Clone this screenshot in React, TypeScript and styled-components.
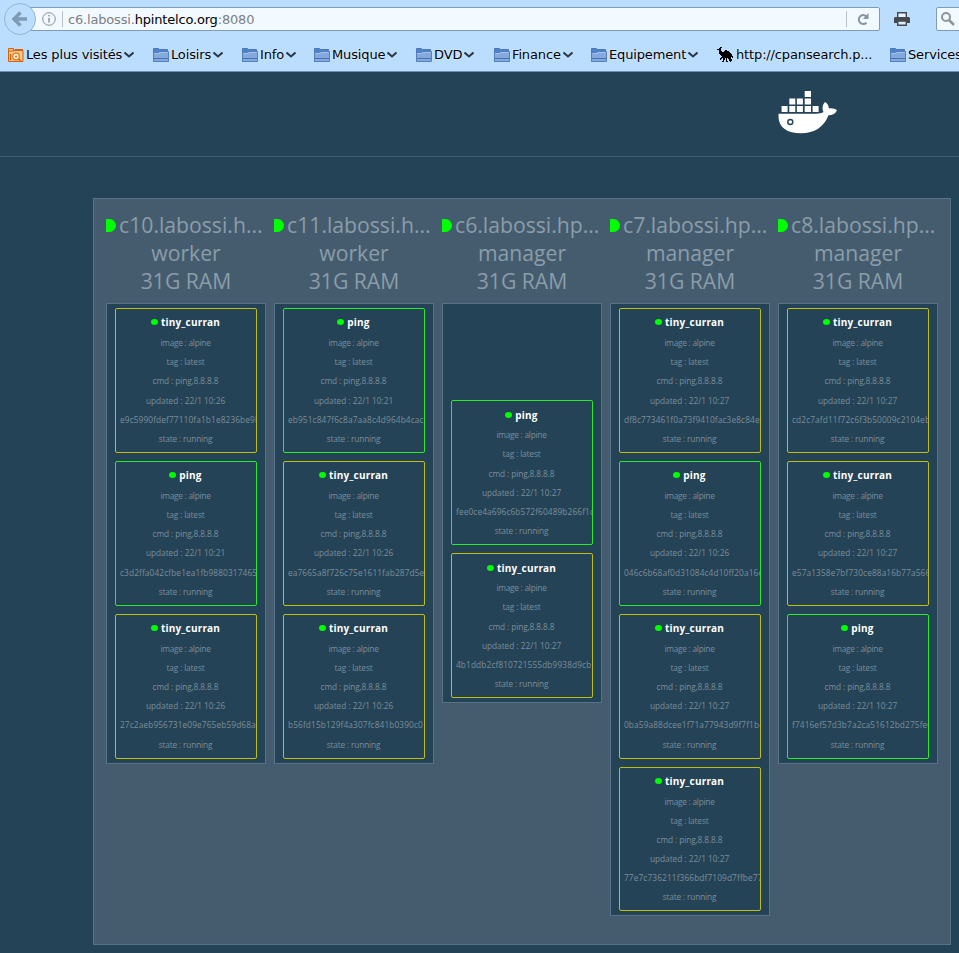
import React from "react";
import styled, { createGlobalStyle } from "styled-components";

const GlobalStyle = createGlobalStyle`
  * { box-sizing: border-box; }
  html, body { margin: 0; padding: 0; overflow: hidden; }
  body { width: 959px; height: 953px; background: #254356; }
`;

const Window = styled.div`
  width: 959px;
  height: 953px;
  overflow: hidden;
  background: #254356;
  font-family: "Open Sans", "Noto Sans", sans-serif;
`;

const Chrome = styled.header`
  height: 72px;
  overflow: hidden;
  background: #bbdeff;
  border-bottom: 1px solid #6d92ad;
  font-family: "DejaVu Sans", sans-serif;
  font-size: 13px;
  color: #000;
`;

const NavBar = styled.div`
  display: flex;
  align-items: center;
  height: 38px;
  padding-left: 4px;
`;

const BackButton = styled.div`
  position: relative;
  z-index: 1;
  width: 32px;
  height: 32px;
  flex: none;
  display: grid;
  place-items: center;
  border: 1px solid #94b5d3;
  border-radius: 50%;
  background: #bbdeff;
`;

const AddressBar = styled.div`
  display: flex;
  align-items: center;
  width: 851px;
  height: 24px;
  flex: none;
  margin-left: -7px;
  padding-left: 12px;
  background: #f2f9ff;
  border: 1px solid #7f9cb6;
  border-radius: 0 2px 2px 0;
`;

const Separator = styled.i<{ $gap: number; $tall?: boolean }>`
  width: 1px;
  height: ${(p) => (p.$tall ? 23 : 16)}px;
  margin-left: ${(p) => p.$gap}px;
  background: ${(p) => (p.$tall ? "#a3c8ea" : "#b9c2cb")};
`;

const Url = styled.span`
  flex: 1;
  padding: 1px 0 0 5px;
  color: #7b7f83;
  letter-spacing: -0.18px;
  line-height: 20px;
  white-space: nowrap;
  b { font-weight: 400; color: #000; }
`;

const ReloadSlot = styled.span`
  width: 33px;
  height: 16px;
  display: grid;
  place-items: center;
  border-left: 1px solid #b9c2cb;
`;

const PrintSlot = styled.span`
  display: flex;
  margin-left: 14px;
`;

const SearchBox = styled.div`
  width: 60px;
  height: 24px;
  flex: none;
  margin-left: 9px;
  padding: 3px 0 0 3px;
  background: #f2f9ff;
  border: 1px solid #7f9cb6;
  border-radius: 2px;
`;

const BookmarksBar = styled.nav`
  display: flex;
  height: 33px;
  padding: 0 0 0 8px;
`;

const Bookmark = styled.div<{ $width: number; $gap: number }>`
  display: flex;
  align-items: center;
  width: ${(p) => p.$width}px;
  height: 33px;
  flex: none;
  letter-spacing: -0.14px;
  white-space: nowrap;
  text-shadow: 0 0 2px #e8f5ff;
  svg { flex: none; }
  span { margin: 0 2px 0 ${(p) => p.$gap}px; }
`;

const PageHeader = styled.div`
  display: flex;
  height: 85px;
  padding: 19px 0 0 778px;
  border-bottom: 1px solid #44606f;
`;

const Cluster = styled.main`
  display: flex;
  align-items: flex-start;
  gap: 8px;
  width: 858px;
  height: 747px;
  margin: 41px 0 0 93px;
  padding: 12px 12px;
  background: #455c6e;
  border: 1px solid #567388;
`;

const NodeColumn = styled.section`
  width: 160px;
  flex: none;
`;

const NodeTitle = styled.div`
  height: 92px;
  color: #8a9daa;
  font-size: 21.2px;
  line-height: 28px;
  text-align: center;
  white-space: nowrap;
`;

const NodeName = styled.div`
  display: flex;
  align-items: center;
  overflow: hidden;
`;

const NodeDot = styled.i`
  width: 10px;
  height: 13px;
  flex: none;
  margin-right: 3px;
  border-radius: 0 7px 7px 0;
  background: #0f0;
`;

const TaskStack = styled.div`
  display: flex;
  flex-direction: column;
  justify-content: flex-end;
  gap: 8px;
  min-height: 400px;
  padding: 4px 8px;
  background: #254356;
  border: 1px solid #567388;
`;

const TaskCard = styled.article<{ $color: string }>`
  width: 142px;
  height: 144.85px;
  flex: none;
  overflow: hidden;
  padding: 3.6px 4px 0;
  border: 1px solid ${(p) => p.$color};
  border-radius: 2px;
  color: #7b8e9b;
  font-size: 8.3px;
  text-align: center;
`;

const TaskName = styled.div`
  display: flex;
  align-items: center;
  justify-content: center;
  gap: 3px;
  height: 20.4px;
  padding-bottom: 0.6px;
  margin-left: -1px;
  color: #fff;
  font-size: 10px;
  font-weight: 700;
  letter-spacing: 0.18px;
`;

const TaskDot = styled.i`
  width: 7px;
  height: 6px;
  border-radius: 50%;
  background: #0f0;
`;

const TaskLine = styled.div<{ $spacing: number; $left?: boolean }>`
  height: 19.2px;
  margin-left: ${(p) => (p.$left ? 0 : -1)}px;
  line-height: 19.2px;
  letter-spacing: ${(p) => p.$spacing}px;
  white-space: nowrap;
  text-align: ${(p) => (p.$left ? "left" : "center")};
`;

const Folder = () => (
  <svg width="16" height="16" viewBox="0 0 16 16">
    <path d="M.5 14.500V1.500h5l1 1h8v12z" fill="#4f83c8" stroke="#4a7abb" />
    <path d="M.5 5.500h5l1-1h9v10H.5z" fill="#84a9dd" stroke="#5580bd" />
    <path d="M1 11.500h14" stroke="#4672b0" />
    <path d="M1.500 6.500h5l1-1h7" fill="none" stroke="#a4c3ec" />
  </svg>
);

const MostVisited = () => (
  <svg width="16" height="16" viewBox="0 0 16 16">
    <path d="M.5 14.500v-13h5v2h9.500v11z" fill="#f9c48c" stroke="#d86208" />
    <path d="M1 4h5l1-1.500h8" fill="none" stroke="#d86208" />
    <circle cx="8" cy="9.500" r="3.300" fill="#fff0dc" stroke="#e07a20" strokeWidth="1.300" />
    <circle cx="8" cy="9.500" r="1" fill="#d86208" />
    <path d="m10.500 12 2.500 2M2.500 7v6" stroke="#d86208" strokeWidth="1.300" />
  </svg>
);

const Camel = () => (
  <svg width="16" height="16" viewBox="0 0 16 16" shapeRendering="crispEdges">
    <path d="M0 2h2V1h1V0h2v1H4v3h1v1h2V4h1V3h2v1h2v1h1v1h1v1h1v2h1v2h-1v-1h-1v2h1v2h-1v1h-1v-1h-1v-2h-1v-1h-1v3h1v1H9v-4H8v2H7v2H5v-1h1v-3H5v1H4v1H3v-2h1v-1h1V9H4V8H3V7H2V3H0z" />
  </svg>
);

const Chevron = () => (
  <svg width="10" height="8" viewBox="0 0 10 8">
    <path d="M.5 1.500 5 5.500l4.500-4" fill="none" stroke="#2b3742" strokeWidth="2" />
  </svg>
);

const Whale = () => (
  <svg width="60" height="44" viewBox="0 0 60 44" fill="#fff">
    <path d="M26.700 0H33v6h-6.300zM11.300 7.500h6v5.900h-6zM18.900 7.500h6v5.900h-6zM26.700 7.500H33v5.900h-6.300zM3.600 15h6v6h-6zM11.300 15h6v6h-6zM18.900 15h6v6h-6zM26.700 15H33v6h-6.300zM34.600 15h6v6h-6z" />
    <path
      fillRule="evenodd"
      d="M.6 22.700H38c3.500 0 6-.4 7.500-1.600-1.800-3.500-1-7.500 1.600-10.100 2.500 1.600 3.800 4 3.700 6.500 3-.6 6 .2 8.200 1.700-1.500 3.400-4.200 5-8.500 5.100C46 36 36.500 42.300 23 42.300 8.500 42.300-.8 36 .6 22.700zM12.300 27.800a3.200 3.200 0 1 0 0 6.400 3.200 3.200 0 0 0 0-6.400zm0 1.400a1.800 1.800 0 1 1 0 3.600 1.800 1.800 0 0 1 0-3.600z"
    />
  </svg>
);

const bookmarks: [string, number, "folder" | "visited" | "camel"][] = [
  ["Les plus visités", 145, "visited"],
  ["Loisirs", 89, "folder"],
  ["Info", 72, "folder"],
  ["Musique", 102, "folder"],
  ["DVD", 78, "folder"],
  ["Finance", 97, "folder"],
  ["Equipement", 126, "folder"],
  ["http://cpansearch.p...", 173, "camel"],
  ["Services", 90, "folder"],
];

type Task = [service: string, time: string, hash: string];
type ClusterNode = { name: string; role: string; tasks: Task[] };

const nodes: ClusterNode[] = [
  {
    name: "c10.labossi.h...", role: "worker", tasks: [
      ["tiny_curran", "10:26", "e9c5990fdef77110fa1b1e8236be9b"],
      ["ping", "10:21", "c3d2ffa042cfbe1ea1fb9880317465"],
      ["tiny_curran", "10:26", "27c2aeb956731e09e765eb59d68a8"],
    ],
  },
  {
    name: "c11.labossi.h...", role: "worker", tasks: [
      ["ping", "10:21", "eb951c847f6c8a7aa8c4d964b4cac8"],
      ["tiny_curran", "10:26", "ea7665a8f726c75e1611fab287d5ea"],
      ["tiny_curran", "10:26", "b56fd15b129f4a307fc841b0390c0"],
    ],
  },
  {
    name: "c6.labossi.hp...", role: "manager", tasks: [
      ["ping", "10:27", "fee0ce4a696c6b572f60489b266f1d"],
      ["tiny_curran", "10:27", "4b1ddb2cf810721555db9938d9cb"],
    ],
  },
  {
    name: "c7.labossi.hp...", role: "manager", tasks: [
      ["tiny_curran", "10:27", "df8c773461f0a73f9410fac3e8c84e"],
      ["ping", "10:26", "046c6b68af0d31084c4d10ff20a16e"],
      ["tiny_curran", "10:27", "0ba59a88dcee1f71a77943d9f7f1bd"],
      ["tiny_curran", "10:27", "77e7c736211f366bdf7109d7ffbe77"],
    ],
  },
  {
    name: "c8.labossi.hp...", role: "manager", tasks: [
      ["tiny_curran", "10:27", "cd2c7afd11f72c6f3b50009c2104eb"],
      ["tiny_curran", "10:27", "e57a1358e7bf730ce88a16b77a566"],
      ["ping", "10:27", "f7416ef57d3b7a2ca51612bd275fe6"],
    ],
  },
];

export default function App() {
  return (
    <Window>
      <GlobalStyle />
      <Chrome>
        <NavBar>
          <BackButton>
            <svg width="16" height="16" viewBox="0 0 16 16">
              <path d="M8.500 1.500 2 8l6.500 6.500M2.500 8H15" fill="none" stroke="#7f9ab4" strokeWidth="3.500" />
            </svg>
          </BackButton>
          <AddressBar>
            <svg width="14" height="14" viewBox="0 0 14 14" fill="none" stroke="#8b9095">
              <circle cx="7" cy="7" r="6.300" />
              <path d="M7 6v4.500M7 3v1.500" strokeWidth="1.500" />
            </svg>
            <Separator $gap={6} />
            <Url>c6.labossi.<b>hpintelco.org</b>:8080</Url>
            <ReloadSlot>
              <svg width="13" height="13" viewBox="0 0 13 13">
                <path d="M9.500 9.800A4.500 4.500 0 1 1 10 4" fill="none" stroke="#8594a5" strokeWidth="2" />
                <path d="M11.500 0v6H6z" fill="#8594a5" />
              </svg>
            </ReloadSlot>
          </AddressBar>
          <PrintSlot>
            <svg width="16" height="14" viewBox="0 0 16 14">
              <path d="M3.700 5V.7h8.600V5" fill="#e8f4ff" stroke="#45494e" strokeWidth="1.400" />
              <path d="M1 5h14l1 1v5H0V6z" fill="#45494e" />
              <path d="M3.700 9h8.600v4.300H3.700z" fill="#dcecf8" stroke="#45494e" strokeWidth="1.400" />
            </svg>
          </PrintSlot>
          <Separator $gap={17} $tall />
          <SearchBox>
            <svg width="16" height="16" viewBox="0 0 16 16" fill="none" stroke="#8d949b">
              <circle cx="6" cy="6" r="4" strokeWidth="2" />
              <path d="m9 9 5 5" strokeWidth="2.500" />
            </svg>
          </SearchBox>
        </NavBar>
        <BookmarksBar>
          {bookmarks.map(([label, width, icon]) => (
            <Bookmark key={label} $width={width} $gap={icon === "camel" ? 3 : 2}>
              {icon === "folder" ? <Folder /> : icon === "visited" ? <MostVisited /> : <Camel />}
              <span>{label}</span>
              {icon !== "camel" && <Chevron />}
            </Bookmark>
          ))}
        </BookmarksBar>
      </Chrome>
      <PageHeader>
        <Whale />
      </PageHeader>
      <Cluster>
        {nodes.map((node) => (
          <NodeColumn key={node.name}>
            <NodeTitle>
              <NodeName><NodeDot />{node.name}</NodeName>
              <div>{node.role}</div>
              <div>31G RAM</div>
            </NodeTitle>
            <TaskStack>
              {node.tasks.map(([service, time, hash]) => (
                <TaskCard key={hash} $color={service === "ping" ? "#26ee26" : "#bfbf12"}>
                  <TaskName><TaskDot />{service}</TaskName>
                  <TaskLine $spacing={-0.25}>image : alpine</TaskLine>
                  <TaskLine $spacing={-0.15}>tag : latest</TaskLine>
                  <TaskLine $spacing={-0.1}>cmd : ping,8.8.8.8</TaskLine>
                  <TaskLine $spacing={-0.02}>updated : 22/1 {time}</TaskLine>
                  <TaskLine $spacing={0.12} $left>{hash}</TaskLine>
                  <TaskLine $spacing={-0.15}>state : running</TaskLine>
                </TaskCard>
              ))}
            </TaskStack>
          </NodeColumn>
        ))}
      </Cluster>
    </Window>
  );
}
